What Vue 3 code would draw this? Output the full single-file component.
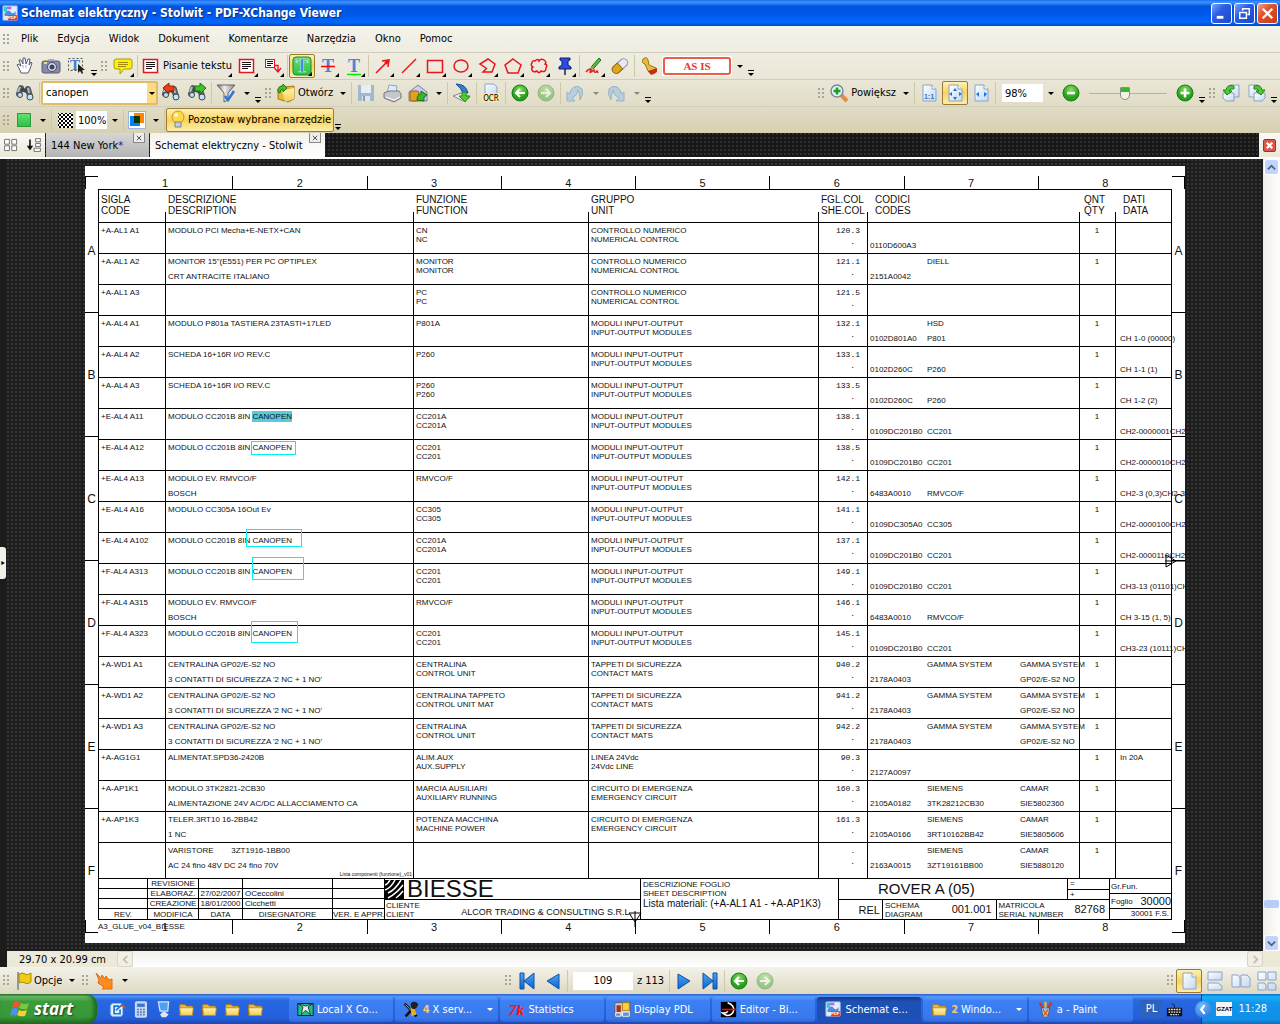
<script setup>
import { ref } from 'vue';

const query = ref('canopen');
const opacity = ref('100%');
const zoom = ref('98%');
const zoomPos = ref(45);
const pageNo = ref('109');

const menu = ['Plik', 'Edycja', 'Widok', 'Dokument', 'Komentarze', 'Narzędzia', 'Okno', 'Pomoc'];

// shared pieces of icons
const sheet = '<path d="M4 2h9l4 4v12H4z" fill="url(#paper)" stroke="#8ba3c7"/><path d="M13 2v4h4" fill="#fff" stroke="#8ba3c7"/>';
const bino = '<path d="M6 5L4 11M13 6l2 7" stroke="#566066" stroke-width="6" stroke-linecap="round"/><path d="M6 6l8 3" stroke="#3c464c" stroke-width="4"/><path d="M5 4l-2 5M13 5l1 5" stroke="#b4c0c6" stroke-width="2"/><circle cx="5" cy="12" r="2.500" fill="#c0e2fa" stroke="#3c464c"/><circle cx="15" cy="14" r="3" fill="#c0e2fa" stroke="#3c464c"/>';
const folder = '<path d="M2 5q0-1 1-1h5l2 2h7v11H2z" fill="#eab842" stroke="#a8740c"/><path d="M2 8h16l-1 9H3z" fill="url(#gold)" stroke="#b8861c"/>';
const redText = '<rect x="2.500" y="3.500" width="14" height="13" fill="#fff" stroke="#e8141c" stroke-width="1.500"/><path d="M5 6.500h9M5 8.500h9M5 10.500h9M5 12.500h6" stroke="#111"/>';
const tee = '<text x="10" y="16" text-anchor="middle" font-family="Liberation Serif, serif" font-weight="bold" font-size="18" fill="#4c86d8">T</text>';
const pdf = '<rect x="1" y="1" width="17" height="17" rx="1" fill="#e6edf8" stroke="#8aa8d8"/><path d="M2 2h4v6H2z" fill="#3cc"/><path d="M6 2h5v3H6z" fill="#a6f"/><path d="M3 10q4-6 7-2t6-1v6H3z" fill="#4b8fe0"/><path d="M7 12h11v6H7z" fill="#e63c22"/><text x="12" y="17" text-anchor="middle" font-family="Liberation Sans, sans-serif" font-weight="bold" font-size="5" fill="#fff">PDF</text>';

const icons = {
  app: pdf,
  hand: '<path d="M6 17L4 12 2 9l1-1 3 2-2-6 2 0 2 4 0-6h2l1 6 2-5 2 0-1 6 2-3 1 1-2 6-2 4z" fill="#fff" stroke="#555d78"/><path d="M8 9v3M11 9v3" stroke="#aab"/>',
  camera: '<rect x="1" y="5" width="18" height="12" rx="2" fill="#858aa6" stroke="#595d78"/><path d="M6 5l1-2h6l1 2z" fill="#a6aac2"/><circle cx="11" cy="11" r="4.500" fill="#d6d9e8" stroke="#4c4f66"/><circle cx="11" cy="11" r="2.500" fill="#3d4258"/><path d="M3 7h3" stroke="#f5d780" stroke-width="2"/>',
  select: '<path d="M1.500 2.500h14v12h-14z" fill="none" stroke="#555" stroke-dasharray="2 2"/><text x="8" y="14" text-anchor="middle" font-family="Liberation Serif, serif" font-weight="bold" font-size="15" fill="#3c7fd6">T</text><path d="M11 8v9l2-2 2 3 1-1-1-3h3z" fill="#222"/>',
  note: '<path d="M3 3h14q2 0 2 2v6q0 2-2 2h-6l-4 5v-5H3q-2 0-2-2V5q0-2 2-2z" fill="#fff200" stroke="#a39a10"/><path d="M5 6.500h10M5 8.500h10M5 10.500h8" stroke="#a08a10"/>',
  textbox: redText,
  callout: '<rect x="2.500" y="3.500" width="9" height="8" fill="#fff" stroke="#e8141c"/><path d="M4 5.500h6M4 7.500h6M4 9.500h4" stroke="#111"/><path d="M12 9.500h3v6M11.500 12l3.500 4 3-4" fill="none" stroke="#e8141c" stroke-width="1.300"/>',
  hilite: '<rect x="1" y="1" width="18" height="18" rx="3" fill="url(#green)" stroke="#1c8a2e"/><text x="10" y="16" text-anchor="middle" font-family="Liberation Serif, serif" font-weight="bold" font-size="18" fill="#3f74d8" stroke="#d4f0e0" stroke-width=".6">T</text>',
  strike: tee + '<path d="M3 10.500h14" stroke="#f00" stroke-width="1.500"/>',
  under: tee + '<path d="M3 18.500h14" stroke="#0e0" stroke-width="1.500"/>',
  arrow: '<path d="M3 17L15 5M9 5l7-1-1 7" fill="none" stroke="#e8141c" stroke-width="1.500"/><path d="M16 4l-5 2 3 3z" fill="#e8141c"/>',
  line: '<path d="M3 17L17 3" stroke="#e8141c" stroke-width="1.500"/>',
  rect: '<rect x="2.500" y="4.500" width="15" height="12" fill="none" stroke="#e8141c" stroke-width="1.500"/>',
  ellipse: '<ellipse cx="10" cy="10" rx="7" ry="6" fill="none" stroke="#e8141c" stroke-width="1.500"/>',
  polyline: '<path d="M9 12l-6-4 8-5 7 5-3 8H6l4-4" fill="none" stroke="#e8141c" stroke-width="1.500"/>',
  polygon: '<path d="M10 3l8 6-3 8H5L2 9z" fill="none" stroke="#e8141c" stroke-width="1.500"/>',
  cloud: '<path d="M6 5q3-3 4 0 2-3 5-1 3 2 1 4 3 1 1 4 0 5-5 3-2 3-4 0-4 2-5-1-1-2 1-3-3-2-1-4 0-3 3-2z" fill="none" stroke="#e8141c" stroke-width="1.500"/>',
  pin: '<path d="M5 2h10v2l-2 1v4l3 2v2H4v-2l3-2V5L5 4z" fill="#2a4ce0" stroke="#101c70"/><path d="M10 13v6" stroke="#223" stroke-width="1.500"/>',
  pencil: '<path d="M15 2l2 2-7 8-4 2 2-4z" fill="#58c040" stroke="#286818"/><path d="M6 14l2-4 2 2z" fill="#c94"/><path d="M2 16q3-4 5-2-2 3 0 2l3-2q0 3 2 2l1-1 1 2" fill="none" stroke="#e02020" stroke-width="1.500"/>',
  eraser: '<g transform="rotate(-42 10 10)"><rect x="1" y="6" width="18" height="8" rx="4" fill="#e4e8f4" stroke="#8a8fa8"/><path d="M10 6H5q-4 0-4 4t4 4h5z" fill="#e0a818" stroke="#94700c"/></g>',
  stamp: '<path d="M4 3q4-3 5 1l1 5 7 3q2 3-2 6-5 0-6-3L6 8Q2 7 4 3z" fill="#e8bc3c" stroke="#9c7414"/><path d="M9 15l9-3v4l-6 3z" fill="#c42c1c"/>',
  bino,
  binoPrev: bino + '<path d="M2 5l6-5v3h5v5H8v3z" fill="#e8401c" stroke="#902008"/>',
  binoNext: bino + '<path d="M19 5l-6-5v3H8v5h5v3z" fill="#40c030" stroke="#187810"/>',
  filter: '<path d="M1 2h18l-7 8v7l-4 2v-9z" fill="url(#steel)" stroke="#666"/><path d="M9 13l3 4 6-9" fill="none" stroke="#2c74e0" stroke-width="2.500"/>',
  open: '<path d="M2 6l3-3 4 1 9-1v13l-6 3-10-3z" fill="#e8b830" stroke="#a87c10"/><path d="M6 8l12-3v11l-9 3z" fill="url(#gold)"/><path d="M2 9q-1-6 5-6V1l4 4-4 4V6q-3 0-3 4z" fill="#48c030" stroke="#1c7c10"/>',
  save: '<path d="M2 2h16v16H2z" fill="#9fb9d0"/><path d="M5 2h10v8H5z" fill="#e8eef2"/><path d="M6 13h8v5H6z" fill="#dfe8ee"/><path d="M8 13v5" stroke="#89a" stroke-width="2"/>',
  print: '<path d="M7 2l8 1-1 7H5z" fill="#dcecff" stroke="#8aa8c8"/><path d="M2 10l5-2h10l2 3v4l-7 4-10-4z" fill="#c4c7cc" stroke="#777"/><path d="M4 14l8 3 6-3" stroke="#fff" fill="none"/>',
  mail: '<path d="M1 9l9-7 9 7v9H1z" fill="#c9cdf0" stroke="#7a80b0"/><rect x="2" y="8" width="9" height="10" rx="2" fill="#e0a020" stroke="#94680c"/><path d="M9 17q0-6 4-6V8l6 4-3 2 0 4z" fill="#38b828" stroke="#187010"/>',
  scan: '<path d="M1 13l8-3 9 4-7 4z" fill="#e8ecf2" stroke="#889"/><path d="M4 1q10 0 12 9h-5Q9 5 4 1z" fill="#2c80d8" stroke="#14508c"/><path d="M10 9h4v4h4l-5 6-6-6h3z" fill="#50c830" stroke="#2c8c18"/>',
  ocr: '<path d="M4 1h9l3 3v7H4z" fill="url(#paper)" stroke="#8ba3c7"/><rect x="1" y="10" width="18" height="9" fill="#fbe7a0"/><text x="10" y="18" text-anchor="middle" font-family="DejaVu Sans Condensed, sans-serif" font-size="8" fill="#000">OCR</text>',
  back: '<circle cx="10" cy="10" r="8" fill="url(#ball)" stroke="#1c7c14"/><path d="M15 10H6M10 6l-4 4 4 4" fill="none" stroke="#fff" stroke-width="2.200"/>',
  undo: '<path d="M2 9v9h8l-3-3q6-3 6-8 2 3 2 10 4-6 2-11-3-4-8-2-4 2-4 7z" fill="#b8cedd" stroke="#98b4c8"/>',
  redo: '<path d="M18 9v9h-8l3-3Q7 12 7 7 5 10 5 17 1 11 3 6q3-4 8-2 4 2 4 7z" fill="#b8cedd" stroke="#98b4c8"/>',
  zoomIn: '<path d="M12 12l6 6" stroke="#e88c40" stroke-width="4"/><circle cx="8" cy="8" r="6" fill="#e2f2fb" stroke="#7a8c9c" stroke-width="1.500"/><path d="M8 4.500v7M4.500 8h7" stroke="#18a018" stroke-width="2.500"/>',
  one: sheet + '<text x="10" y="16" text-anchor="middle" font-family="Liberation Sans, sans-serif" font-size="7" font-weight="bold" fill="#2878d0">1:1</text>',
  fit: sheet + '<path d="M8 8l2-3 2 3zM8 14l2 3 2-3zM7 9l-3 2 3 2zM14 9l3 2-3 2z" fill="#1c74e0"/>',
  fitw: sheet + '<path d="M8 9l-3 2 3 3zM13 9l3 2-3 3z" fill="#1c74e0"/>',
  minus: '<circle cx="10" cy="10" r="8" fill="url(#ball)" stroke="#1c7c14"/><path d="M6 10h8" stroke="#fff" stroke-width="2.500"/>',
  plus: '<circle cx="10" cy="10" r="8" fill="url(#ball)" stroke="#1c7c14"/><path d="M5.500 10h9M10 5.500v9" stroke="#fff" stroke-width="2.500"/>',
  rotL: '<path d="M9 2h9v12H9z" fill="url(#paper)" stroke="#8ba3c7"/><path d="M2 10h11v8H5l-3-3z" fill="url(#paper)" stroke="#8ba3c7"/><path d="M13 3Q6 1 5 7H2l4 5 5-4H8q1-3 5-2z" fill="#50c838" stroke="#1c8414"/>',
  rotR: '<path d="M2 2h9v12H2z" fill="url(#paper)" stroke="#8ba3c7"/><path d="M7 10h11v5l-3 3H7z" fill="url(#paper)" stroke="#8ba3c7"/><path d="M7 3q7-2 8 4h3l-4 5-5-4h3q-1-3-5-2z" fill="#50c838" stroke="#1c8414"/>',
  color: '<rect x="3.500" y="3.500" width="13" height="13" fill="url(#green)" stroke="#2a9a3a"/>',
  checker: '<rect x="3" y="3" width="15" height="15" fill="url(#chk)"/>',
  blend: '<rect x="1.500" y="1.500" width="17" height="17" fill="#fff" stroke="#9bb8d8"/><path d="M7 3h10v10H7z" fill="#ff8400"/><path d="M3 6h10v10H3z" fill="#0a7cff"/><path d="M7 6h6v7H7z" fill="#003c00"/>',
  bulb: '<circle cx="10" cy="7" r="6" fill="#ffd84a" stroke="#c89a18"/><path d="M7 12h6v5H7z" fill="#c9ccd4" stroke="#788"/><circle cx="8" cy="5" r="2" fill="#fff8d0"/>',
  flag: '<path d="M4 1v18" stroke="#999" stroke-width="2"/><path d="M5 3q4-2 6 0t6-1v9q-3 3-6 1t-6 0z" fill="#f0cc10" stroke="#a88c08"/>',
  launch: '<path d="M2 2l5 5 1-3 3 4 1-3 3 4 3-1v10H8l2-2-6-4 1-3z" fill="#ff8c1c" stroke="#e06c18"/>',
  first: '<path d="M3 2h4v16H3zM17 2v16L7 10z" fill="url(#blue)" stroke="#0c50a8"/>',
  prev: '<path d="M16 3v15L4 10z" fill="url(#blue)" stroke="#0c50a8"/>',
  next: '<path d="M4 3v15l12-8z" fill="url(#blue)" stroke="#0c50a8"/>',
  last: '<path d="M17 2h-4v16h4zM3 2v16l10-8z" fill="url(#blue)" stroke="#0c50a8"/>',
  single: sheet,
  cont: '<path d="M3 1h14v8H3z" fill="url(#paper)" stroke="#8ba3c7"/><path d="M3 12h10l4 3v4H3z" fill="url(#paper)" stroke="#8ba3c7"/>',
  facing: '<path d="M1 4h6l2 3v9H1zM10 4h6l3 3v9h-9z" fill="url(#paper)" stroke="#8ba3c7"/>',
  contFacing: '<path d="M1 1h8v8H1zM11 1h8v8h-8zM1 12h6l2 2v5H1zM11 12h6l2 2v5h-8z" fill="url(#paper)" stroke="#8ba3c7"/>',
  folder,
  outlook: '<rect x="2" y="3" width="14" height="15" rx="3" fill="#e8f4ff" stroke="#8cc0f0"/><path d="M12 6H6v9h7v-5M8 11l9-8" fill="none" stroke="#1c78d0" stroke-width="2"/><path d="M15 5l4 3" stroke="#e05010" stroke-width="2"/>',
  calc: '<rect x="4" y="1" width="13" height="18" rx="1" fill="#c2d8f4" stroke="#e0ecfc"/><path d="M6 3h9v4H6z" fill="#3c78c8"/><path d="M6 10h9M6 13h9M6 16h9" stroke="#5078b8" stroke-width="2" stroke-dasharray="2 1.500"/>',
  pc: '<path d="M4 1h12l-1 11H6z" fill="#4ca0f0" stroke="#d4e4f4" stroke-width="1.500"/><path d="M9 13h3l4 3-3 3H8l-2-3z" fill="#e0e4ec"/>',
  localx: '<rect x="1" y="3" width="18" height="14" fill="#16c890" stroke="#111"/><path d="M1 3l6 4-2 9 5-5 6 5-3-9 6-4-9 3z" fill="#eee" stroke="#222"/>',
  xserv: '<path d="M2 3l14 15M17 3L3 18" stroke="#111" stroke-width="3"/><path d="M3 4l11 12" stroke="#e8b020"/><path d="M9 8l5 2 2 6-6 2z" fill="#e8b020"/><circle cx="13" cy="5" r="4" fill="#222"/>',
  tk: '<text x="10" y="16" text-anchor="middle" font-family="Liberation Serif, serif" font-style="italic" font-weight="bold" font-size="18" fill="#ff1010">7k</text>',
  pdl: '<path d="M1 2h18v16H1z" fill="#c8ccd4" stroke="#556"/><path d="M3 5h5v8H3z" fill="#b82c10"/><path d="M10 2h8v9h-8z" fill="#ffd040" stroke="#a87c10"/><path d="M2 14h6v4H2zM10 13h8v5h-8z" fill="#5c90e0" stroke="#fff"/>',
  editor: '<path d="M1 1h18v18H1z" fill="#000"/><path d="M9 2q8 3 7 9t-8 6q-3-1-5-3 5 1 6-2" fill="none" stroke="#fff" stroke-width="1.800"/><path d="M2 10h17" stroke="#e01010" stroke-width="2"/>',
  paint: '<path d="M5 8h10l-2 11H7z" fill="#a8c8e8" stroke="#456"/><path d="M7 8L3 2M13 8l4-6" stroke="#d83010" stroke-width="2.500"/><path d="M10 8V1" stroke="#f0c020" stroke-width="2.500"/><path d="M7 10l6 8M13 10l-6 8" stroke="#e05818" stroke-width="1.500"/>',
  keyboard: '<rect x="1" y="8" width="18" height="10" fill="#111"/><path d="M3 10h14M3 13h14M5 16h10" stroke="#eee" stroke-width="1.500" stroke-dasharray="2 1"/><path d="M10 8V5L7 3" stroke="#111" fill="none"/>',
  thumbs: '<path d="M2 3h6v6H2zM11 3h6v6h-6zM2 11h6v6H2zM11 11h6v6h-6z" fill="#fff" stroke="#555"/>',
  sort: '<path d="M5 3v10" stroke="#111" stroke-width="2"/><path d="M1 11l4 6 4-6z" fill="#111"/><path d="M12 2h6v4h-6zM12 8h6v4h-6zM10 14h8v4h-8z" fill="#fff" stroke="#555"/>',
};

const shapes = ['arrow', 'line', 'rect', 'ellipse', 'polyline', 'polygon', 'cloud', 'pin'];

// s: code, d: description, f: function, u: unit, p: sheet.col, c: [code, maker, type, reseller, order no], q: quantity, n/m: data
const cn = ['CONTROLLO NUMERICO', 'NUMERICAL CONTROL'];
const io = ['MODULI INPUT-OUTPUT', 'INPUT-OUTPUT MODULES'];
const mats = ['TAPPETI DI SICUREZZA', 'CONTACT MATS'];
const emg = ['CIRCUITO DI EMERGENZA', 'EMERGENCY CIRCUIT'];
const gp = ['CENTRALINA GP02/E-S2 NO', "3 CONTATTI DI SICUREZZA '2 NC + 1 NO'"];
const gamma = ['2178A0403', 'GAMMA SYSTEM', '', 'GAMMA SYSTEM', 'GP02/E-S2 NO'];

const rows = [
  { s: '+A-AL1 A1', d: ['MODULO PCI Mecha+E-NETX+CAN'], f: ['CN', 'NC'], u: cn, p: '120.3', c: ['0110D600A3'], q: 1 },
  { s: '+A-AL1 A2', d: ['MONITOR 15"(E551) PER PC OPTIPLEX', 'CRT ANTRACITE ITALIANO'], f: ['MONITOR', 'MONITOR'], u: cn, p: '121.1', c: ['2151A0042', 'DIELL'], q: 1 },
  { s: '+A-AL1 A3', d: [], f: ['PC', 'PC'], u: cn, p: '121.5', c: [] },
  { s: '+A-AL4 A1', d: ['MODULO P801a TASTIERA 23TASTI+17LED'], f: ['P801A'], u: io, p: '132.1', c: ['0102D801A0', 'HSD', 'P801'], q: 1, m: 'CH 1-0 (00000)' },
  { s: '+A-AL4 A2', d: ['SCHEDA 16+16R I/O REV.C'], f: ['P260'], u: io, p: '133.1', c: ['0102D260C', '', 'P260'], q: 1, m: 'CH 1-1 (1)' },
  { s: '+A-AL4 A3', d: ['SCHEDA 16+16R I/O REV.C'], f: ['P260', 'P260'], u: io, p: '133.5', c: ['0102D260C', '', 'P260'], q: 1, m: 'CH 1-2 (2)' },
  { s: '+E-AL4 A11', d: ['MODULO CC201B 8IN '], hit: true, f: ['CC201A', 'CC201A'], u: io, p: '138.1', c: ['0109DC201B0', '', 'CC201'], q: 1, m: 'CH2-0000001CH2' },
  { s: '+E-AL4 A12', d: ['MODULO CC201B 8IN CANOPEN'], f: ['CC201', 'CC201'], u: io, p: '138.5', c: ['0109DC201B0', '', 'CC201'], q: 1, m: 'CH2-0000010CH2' },
  { s: '+E-AL4 A13', d: ['MODULO EV. RMVCO/F', 'BOSCH'], f: ['RMVCO/F'], u: io, p: '142.1', c: ['6483A0010', '', 'RMVCO/F'], q: 1, m: 'CH2-3 (0,3)CH2-3' },
  { s: '+E-AL4 A16', d: ['MODULO CC305A 16Out Ev'], f: ['CC305', 'CC305'], u: io, p: '141.1', c: ['0109DC305A0', '', 'CC305'], q: 1, m: 'CH2-0000100CH2' },
  { s: '+E-AL4 A102', d: ['MODULO CC201B 8IN CANOPEN'], f: ['CC201A', 'CC201A'], u: io, p: '137.1', c: ['0109DC201B0', '', 'CC201'], q: 1, m: 'CH2-0000110CH2' },
  { s: '+F-AL4 A313', d: ['MODULO CC201B 8IN CANOPEN'], f: ['CC201', 'CC201'], u: io, p: '149.1', c: ['0109DC201B0', '', 'CC201'], q: 1, m: 'CH3-13 (01101)CH' },
  { s: '+F-AL4 A315', d: ['MODULO EV. RMVCO/F', 'BOSCH'], f: ['RMVCO/F'], u: io, p: '146.1', c: ['6483A0010', '', 'RMVCO/F'], q: 1, m: 'CH 3-15 (1, 5)' },
  { s: '+F-AL4 A323', d: ['MODULO CC201B 8IN CANOPEN'], f: ['CC201', 'CC201'], u: io, p: '145.1', c: ['0109DC201B0', '', 'CC201'], q: 1, m: 'CH3-23 (10111)CH' },
  { s: '+A-WD1 A1', d: gp, f: ['CENTRALINA', 'CONTROL UNIT'], u: mats, p: '940.2', c: gamma, q: 1 },
  { s: '+A-WD1 A2', d: gp, f: ['CENTRALINA TAPPETO', 'CONTROL UNIT MAT'], u: mats, p: '941.2', c: gamma, q: 1 },
  { s: '+A-WD1 A3', d: gp, f: ['CENTRALINA', 'CONTROL UNIT'], u: mats, p: '942.2', c: gamma, q: 1 },
  { s: '+A-AG1G1', d: ['ALIMENTAT.SPD36-2420B'], f: ['ALIM.AUX', 'AUX.SUPPLY'], u: ['LINEA 24Vdc', '24Vdc LINE'], p: '90.3', c: ['2127A0097'], q: 1, n: 'In 20A' },
  { s: '+A-AP1K1', d: ['MODULO 3TK2821-2CB30', 'ALIMENTAZIONE 24V AC/DC ALLACCIAMENTO CA'], f: ['MARCIA AUSILIARI', 'AUXILIARY RUNNING'], u: emg, p: '160.3', c: ['2105A0182', 'SIEMENS', '3TK28212CB30', 'CAMAR', 'SIE5802360'], q: 1 },
  { s: '+A-AP1K3', d: ['TELER.3RT10 16-2BB42', '1 NC'], f: ['POTENZA MACCHINA', 'MACHINE POWER'], u: emg, p: '161.3', c: ['2105A0166', 'SIEMENS', '3RT10162BB42', 'CAMAR', 'SIE5805606'], q: 1 },
  { s: '', d: ['VARISTORE        3ZT1916-1BB00', 'AC 24 fino 48V DC 24 fino 70V'], f: [], u: [], p: '. ', c: ['2163A0015', 'SIEMENS', '3ZT19161BB00', 'CAMAR', 'SIE5880120'], q: 1, foot: 'Lista componenti (funzione)_v01' },
];

// rectangles drawn by hand over the sheet
const marks = [
  { x: 166, y: 275, w: 45, h: 14 },
  { x: 161, y: 363, w: 56, h: 18 },
  { x: 167, y: 391, w: 52, h: 23 },
  { x: 166, y: 455, w: 47, h: 22 },
];
const px = (m) => ({ left: m.x + 'px', top: m.y + 'px', width: m.w + 'px', height: m.h + 'px' });

const tasks = [
  { icon: 'localx', text: 'Local X Co...' },
  { icon: 'xserv', n: 4, text: 'X serv...' },
  { icon: 'tk', text: 'Statistics' },
  { icon: 'pdl', text: 'Display PDL' },
  { icon: 'editor', text: 'Editor - Bi...' },
  { icon: 'app', text: 'Schemat e...', on: true },
  { icon: 'folder', n: 2, text: 'Windo...' },
  { icon: 'paint', text: 'a - Paint' },
];
</script>

<template>
  <div class="window">
    <svg class="defs" width="0" height="0" aria-hidden="true">
      <defs>
        <linearGradient id="paper" x2="1" y2="1"><stop stop-color="#fff" /><stop offset="1" stop-color="#c4d8f0" /></linearGradient>
        <linearGradient id="gold" x2="0" y2="1"><stop stop-color="#fff4b4" /><stop offset="1" stop-color="#f4cc54" /></linearGradient>
        <linearGradient id="green" x2="0" y2="1"><stop stop-color="#62e070" /><stop offset="1" stop-color="#2fbf48" /></linearGradient>
        <linearGradient id="steel"><stop stop-color="#666" /><stop offset=".4" stop-color="#eee" /><stop offset="1" stop-color="#888" /></linearGradient>
        <linearGradient id="blue" x2="0" y2="1"><stop stop-color="#4ca4f4" /><stop offset="1" stop-color="#0c64cc" /></linearGradient>
        <radialGradient id="ball" cy=".3"><stop stop-color="#8ce060" /><stop offset="1" stop-color="#26a01c" /></radialGradient>
        <pattern id="chk" width="4" height="4" patternUnits="userSpaceOnUse"><rect width="4" height="4" fill="#fff" /><path d="M0 0h2v2H0zM2 2h2v2H2z" fill="#000" /></pattern>
      </defs>
    </svg>

    <header class="titlebar">
      <svg class="ico small" viewBox="0 0 20 20" v-html="icons.app"></svg>
      <h1>Schemat elektryczny - Stolwit - PDF-XChange Viewer</h1>
      <button class="cap" aria-label="Minimalizuj"><svg viewBox="0 0 20 20"><path d="M5 14h7" stroke="#fff" stroke-width="3" /></svg></button>
      <button class="cap" aria-label="Przywróć"><svg viewBox="0 0 20 20"><path d="M8 7V5h7v6h-2M5 9h7v6H5z" fill="none" stroke="#fff" stroke-width="1.5" /></svg></button>
      <button class="cap close" aria-label="Zamknij"><svg viewBox="0 0 20 20"><path d="M5 5l10 10M15 5L5 15" stroke="#fff" stroke-width="2.5" /></svg></button>
    </header>

    <div class="bars">
      <nav class="bar menubar">
        <i class="grip"></i>
        <button v-for="m in menu" :key="m">{{ m }}</button>
      </nav>

      <div class="bar">
        <i class="grip"></i>
        <button v-for="n in ['hand', 'camera', 'select']" :key="n" class="tb" :aria-label="n"><svg class="ico" viewBox="0 0 20 20" v-html="icons[n]"></svg></button>
        <i class="more"></i>
        <i class="grip"></i>
        <button class="tb sub" aria-label="note"><svg class="ico" viewBox="0 0 20 20" v-html="icons.note"></svg></button>
        <i class="sep"></i>
        <button class="tb sub typing"><svg class="ico" viewBox="0 0 20 20" v-html="icons.textbox"></svg>Pisanie tekstu</button>
        <button v-for="n in ['textbox', 'callout']" :key="n" class="tb sub" :aria-label="n"><svg class="ico" viewBox="0 0 20 20" v-html="icons[n]"></svg></button>
        <i class="sep"></i>
        <button class="tb sub on" aria-label="hilite"><svg class="ico" viewBox="0 0 20 20" v-html="icons.hilite"></svg></button>
        <button v-for="n in ['strike', 'under']" :key="n" class="tb sub" :aria-label="n"><svg class="ico" viewBox="0 0 20 20" v-html="icons[n]"></svg></button>
        <i class="sep"></i>
        <button v-for="n in shapes" :key="n" class="tb sub" :aria-label="n"><svg class="ico" viewBox="0 0 20 20" v-html="icons[n]"></svg></button>
        <i class="sep"></i>
        <button class="tb sub" aria-label="pencil"><svg class="ico" viewBox="0 0 20 20" v-html="icons.pencil"></svg></button>
        <button class="tb" aria-label="eraser"><svg class="ico" viewBox="0 0 20 20" v-html="icons.eraser"></svg></button>
        <i class="sep"></i>
        <button class="tb" aria-label="stamp"><svg class="ico" viewBox="0 0 20 20" v-html="icons.stamp"></svg></button>
        <button class="asis"><span>AS IS</span></button>
        <button class="dd" aria-label="Stemple"></button>
        <i class="more"></i>
      </div>

      <div class="bar">
        <i class="grip"></i>
        <button class="tb" aria-label="bino"><svg class="ico" viewBox="0 0 20 20" v-html="icons.bino"></svg></button>
        <i class="sep"></i>
        <div class="search">
          <input v-model="query" type="text" aria-label="Szukaj">
          <button class="dd" aria-label="Historia"></button>
        </div>
        <button v-for="n in ['binoPrev', 'binoNext']" :key="n" class="tb" :aria-label="n"><svg class="ico" viewBox="0 0 20 20" v-html="icons[n]"></svg></button>
        <i class="sep"></i>
        <button class="tb" aria-label="filter"><svg class="ico" viewBox="0 0 20 20" v-html="icons.filter"></svg></button>
        <button class="dd" aria-label="Opcje filtra"></button>
        <i class="more"></i>
        <i class="grip"></i>
        <button class="tb wide"><svg class="ico" viewBox="0 0 20 20" v-html="icons.open"></svg>Otwórz</button>
        <button class="dd" aria-label="Ostatnie"></button>
        <i class="sep"></i>
        <button v-for="n in ['save', 'print', 'mail']" :key="n" class="tb" :aria-label="n"><svg class="ico" viewBox="0 0 20 20" v-html="icons[n]"></svg></button>
        <button class="dd" aria-label="Wyślij"></button>
        <i class="sep"></i>
        <button class="tb" aria-label="scan"><svg class="ico" viewBox="0 0 20 20" v-html="icons.scan"></svg></button>
        <i class="sep"></i>
        <button class="tb" aria-label="ocr"><svg class="ico" viewBox="0 0 20 20" v-html="icons.ocr"></svg></button>
        <i class="sep"></i>
        <button class="tb" aria-label="back"><svg class="ico" viewBox="0 0 20 20" v-html="icons.back"></svg></button>
        <button class="tb off" disabled aria-label="forward"><svg class="ico flip" viewBox="0 0 20 20" v-html="icons.back"></svg></button>
        <i class="sep"></i>
        <button class="tb" disabled aria-label="undo"><svg class="ico" viewBox="0 0 20 20" v-html="icons.undo"></svg></button>
        <button class="dd off" disabled aria-label="Cofnij"></button>
        <button class="tb" disabled aria-label="redo"><svg class="ico" viewBox="0 0 20 20" v-html="icons.redo"></svg></button>
        <button class="dd off" disabled aria-label="Ponów"></button>
        <i class="more"></i>

        <i class="grip right"></i>
        <button class="tb wide"><svg class="ico" viewBox="0 0 20 20" v-html="icons.zoomIn"></svg>Powiększ</button>
        <button class="dd" aria-label="Powiększanie"></button>
        <i class="sep"></i>
        <button class="tb" aria-label="one"><svg class="ico" viewBox="0 0 20 20" v-html="icons.one"></svg></button>
        <button class="tb on" aria-label="fit"><svg class="ico" viewBox="0 0 20 20" v-html="icons.fit"></svg></button>
        <button class="tb" aria-label="fitw"><svg class="ico" viewBox="0 0 20 20" v-html="icons.fitw"></svg></button>
        <i class="sep"></i>
        <input v-model="zoom" class="field zoomfield" type="text" aria-label="Skala">
        <button class="dd" aria-label="Skale"></button>
        <button class="tb" aria-label="minus"><svg class="ico" viewBox="0 0 20 20" v-html="icons.minus"></svg></button>
        <input v-model="zoomPos" class="slider" type="range" min="0" max="100" aria-label="Suwak skali">
        <button class="tb" aria-label="plus"><svg class="ico" viewBox="0 0 20 20" v-html="icons.plus"></svg></button>
        <i class="more"></i>
        <i class="grip"></i>
        <button v-for="n in ['rotL', 'rotR']" :key="n" class="tb" :aria-label="n"><svg class="ico" viewBox="0 0 20 20" v-html="icons[n]"></svg></button>
        <i class="more"></i>
      </div>

      <div class="bar">
        <i class="grip"></i>
        <button class="tb slim" aria-label="color"><svg class="ico" viewBox="0 0 20 20" v-html="icons.color"></svg></button>
        <button class="dd" aria-label="Kolor"></button>
        <i class="sep"></i>
        <button class="tb slim" aria-label="checker"><svg class="ico" viewBox="0 0 20 20" v-html="icons.checker"></svg></button>
        <input v-model="opacity" class="field opfield" type="text" aria-label="Krycie">
        <button class="dd" aria-label="Krycia"></button>
        <i class="sep"></i>
        <button class="tb slim" aria-label="blend"><svg class="ico" viewBox="0 0 20 20" v-html="icons.blend"></svg></button>
        <button class="dd" aria-label="Mieszanie"></button>
        <i class="sep"></i>
        <button class="tb wide on keep"><svg class="ico" viewBox="0 0 20 20" v-html="icons.bulb"></svg>Pozostaw wybrane narzędzie</button>
        <i class="more"></i>
      </div>
    </div>

    <div class="tabs">
      <div class="tabtools">
        <button v-for="n in ['thumbs', 'sort']" :key="n" :aria-label="n"><svg class="ico" viewBox="0 0 20 20" v-html="icons[n]"></svg></button>
      </div>
      <div class="tab">
        <a href="#">144 New York<b>*</b></a>
        <button aria-label="Zamknij kartę"><svg viewBox="0 0 8 8"><path d="M1 1l6 6M7 1L1 7" /></svg></button>
      </div>
      <div class="tab current">
        <a href="#">Schemat elektryczny - Stolwit</a>
        <button aria-label="Zamknij kartę"><svg viewBox="0 0 8 8"><path d="M1 1l6 6M7 1L1 7" /></svg></button>
      </div>
      <div class="closeall">
        <button aria-label="Zamknij dokument"><svg viewBox="0 0 12 12"><path d="M3 3l6 6M9 3L3 9" stroke="#fff" stroke-width="2.5" /></svg></button>
      </div>
    </div>

    <div class="work">
      <div class="splitter"><button aria-label="Panel">▸</button></div>
      <main class="canvas">
        <article class="sheet">
          <div class="corner tl"></div>
          <div class="ruler top"><span v-for="n in 8" :key="n">{{ n }}</span></div>
          <div class="corner tr"></div>

          <div class="side"><span v-for="l in 'ABCDEF'" :key="l">{{ l }}</span></div>

          <section class="frame">
            <table class="parts">
              <colgroup>
                <col class="c-sigla"><col><col class="c-fun"><col class="c-unit"><col class="c-fgl"><col class="c-code"><col class="c-qty"><col class="c-data">
              </colgroup>
              <thead>
                <tr>
                  <th>SIGLA<br>CODE</th>
                  <th>DESCRIZIONE<br>DESCRIPTION</th>
                  <th>FUNZIONE<br>FUNCTION</th>
                  <th>GRUPPO<br>UNIT</th>
                  <th>FGL.COL<br>SHE.COL</th>
                  <th class="h-code">CODICI<br>CODES</th>
                  <th class="h-qty">QNT<br>QTY</th>
                  <th class="h-data">DATI<br>DATA</th>
                </tr>
              </thead>
              <tbody>
                <tr v-for="(r, i) in rows" :key="i">
                  <td>{{ r.s }}</td>
                  <td class="desc">
                    <p>{{ r.d[0] }}<mark v-if="r.hit">CANOPEN</mark></p>
                    <p class="low">{{ r.d[1] }}</p>
                    <small v-if="r.foot">{{ r.foot }}</small>
                  </td>
                  <td>{{ r.f[0] }}<br>{{ r.f[1] }}</td>
                  <td>{{ r.u[0] }}<br>{{ r.u[1] }}</td>
                  <td class="fgl"><p>{{ r.p }}</p><p class="dot">.</p></td>
                  <td class="code">
                    <div class="codes">
                      <span></span><span>{{ r.c[1] }}</span><span>{{ r.c[3] }}</span>
                      <span>{{ r.c[0] }}</span><span>{{ r.c[2] }}</span><span>{{ r.c[4] }}</span>
                    </div>
                  </td>
                  <td class="qty">{{ r.q }}</td>
                  <td class="data"><p>{{ r.n }}</p><p class="low">{{ r.m }}</p></td>
                </tr>
              </tbody>
            </table>

            <footer class="block">
              <table class="revs">
                <colgroup><col class="r1"><col class="r2"><col class="r3"><col class="r4"><col></colgroup>
                <tbody>
                  <tr><td></td><td>REVISIONE</td><td></td><td></td><td></td></tr>
                  <tr><td></td><td>ELABORAZ.</td><td>27/02/2007</td><td class="name">OCeccolini</td><td></td></tr>
                  <tr><td></td><td>CREAZIONE</td><td>18/01/2000</td><td class="name">Cicchetti</td><td></td></tr>
                  <tr><td>REV.</td><td>MODIFICA</td><td>DATA</td><td>DISEGNATORE</td><td>VER. E APPR.</td></tr>
                </tbody>
              </table>
              <div class="client">
                <div class="brand">
                  <svg viewBox="0 0 19 19"><path d="M0 0h19v19H0z" fill="#000" /><path d="M0 5q3-1 5-5M0 10q6-2 10-10M3 13q7-3 13-13M3 18q8-4 15-13M11 18q4-3 7-7" fill="none" stroke="#fff" stroke-width="1.5" /></svg>
                  <strong>BIESSE</strong>
                </div>
                <div class="who"><span>CLIENTE<br>CLIENT</span><em>ALCOR TRADING &amp; CONSULTING S.R.L.</em></div>
              </div>
              <div class="about">DESCRIZIONE FOGLIO<br>SHEET DESCRIPTION<p>Lista materiali: (+A-AL1 A1 - +A-AP1K3)</p></div>
              <div class="model">
                <div class="rover"><strong>ROVER A (05)</strong><div class="signs"><span>=</span><span>+</span></div></div>
                <div class="nums">
                  <b class="rel">REL</b>
                  <div><span>SCHEMA<br>DIAGRAM</span><b>001.001</b></div>
                  <div><span>MATRICOLA<br>SERIAL NUMBER</span><b>82768</b></div>
                </div>
              </div>
              <div class="folio">
                <div>Gr.Fun.</div>
                <div>Foglio <b>30000</b></div>
                <div class="next">30001 F.S.</div>
              </div>
            </footer>
          </section>

          <div class="side"><span v-for="l in 'ABCDEF'" :key="l">{{ l }}</span></div>

          <div class="corner bl"></div>
          <div class="ruler bottom"><span v-for="n in 8" :key="n">{{ n }}</span></div>
          <div class="corner br"></div>

          <span class="template">A3_GLUE_v04_BIESSE</span>
          <svg class="fold down" viewBox="0 0 14 16"><path d="M1 2h12L7 11zM7 0v16" fill="none" stroke="#000" /></svg>
          <svg class="fold east" viewBox="0 0 20 14"><path d="M1 1v12l10-6zM0 7h20" fill="none" stroke="#000" /></svg>
          <i v-for="(m, i) in marks" :key="i" class="box" :style="px(m)"></i>
        </article>
      </main>
      <div class="vscroll">
        <button aria-label="W górę"><svg viewBox="0 0 10 10"><path d="M1 7l4-4 4 4" /></svg></button>
        <i class="thumb"></i>
        <button aria-label="W dół"><svg viewBox="0 0 10 10"><path d="M1 3l4 4 4-4" /></svg></button>
      </div>
    </div>

    <div class="status">
      <span class="size">29.70 x 20.99 cm</span>
      <button disabled aria-label="W lewo"><svg viewBox="0 0 10 10"><path d="M7 1L3 5l4 4" /></svg></button>
      <div class="track"></div>
      <button disabled aria-label="W prawo"><svg viewBox="0 0 10 10"><path d="M3 1l4 4-4 4" /></svg></button>
      <i class="sizer"></i>
    </div>

    <div class="navbar">
      <div class="group">
        <i class="grip"></i>
        <button class="tb wide nogap"><svg class="ico" viewBox="0 0 20 20" v-html="icons.flag"></svg>Opcje</button>
        <button class="dd" aria-label="Opcje"></button>
        <i class="grip"></i>
        <button class="tb" aria-label="launch"><svg class="ico" viewBox="0 0 20 20" v-html="icons.launch"></svg></button>
        <button class="dd" aria-label="Uruchom"></button>
      </div>
      <div class="group">
        <i class="grip"></i>
        <button v-for="n in ['first', 'prev']" :key="n" class="tb" :aria-label="n"><svg class="ico" viewBox="0 0 20 20" v-html="icons[n]"></svg></button>
        <i class="sep"></i>
        <label class="pager"><input v-model="pageNo" class="field" type="text"> z 113</label>
        <i class="sep"></i>
        <button v-for="n in ['next', 'last']" :key="n" class="tb" :aria-label="n"><svg class="ico" viewBox="0 0 20 20" v-html="icons[n]"></svg></button>
        <i class="sep"></i>
        <button class="tb" aria-label="back"><svg class="ico" viewBox="0 0 20 20" v-html="icons.back"></svg></button>
        <button class="tb off" disabled aria-label="forward"><svg class="ico flip" viewBox="0 0 20 20" v-html="icons.back"></svg></button>
      </div>
      <div class="group end">
        <i class="grip"></i>
        <button class="tb on" aria-label="single"><svg class="ico" viewBox="0 0 20 20" v-html="icons.single"></svg></button>
        <button v-for="n in ['cont', 'facing', 'contFacing']" :key="n" class="tb" :aria-label="n"><svg class="ico" viewBox="0 0 20 20" v-html="icons[n]"></svg></button>
      </div>
    </div>

    <footer class="taskbar">
      <button class="start">
        <svg viewBox="0 0 20 20"><path d="M4 3q3-2 6 0L8 9q-3-2-6 0z" fill="#f0582c" /><path d="M11 4q3 2 8 0l-2 6q-4 1-8-1z" fill="#7cc83c" /><path d="M2 10q3-2 6 0l-2 7q-3-2-6 0z" fill="#4c90f4" /><path d="M9 11q3 2 8 0l-2 6q-4 1-8-1z" fill="#fcd02c" /></svg>
        start
      </button>
      <div class="quick">
        <button v-for="(n, i) in ['outlook', 'calc', 'pc', 'folder', 'folder', 'folder', 'folder']" :key="i" :aria-label="n"><svg class="ico small" viewBox="0 0 20 20" v-html="icons[n]"></svg></button>
      </div>
      <div class="tasks">
        <button v-for="t in tasks" :key="t.text" :class="{ on: t.on }">
          <svg class="ico small" viewBox="0 0 20 20" v-html="icons[t.icon]"></svg>
          <b v-if="t.n">{{ t.n }}</b>
          <span>{{ t.text }}</span>
          <i v-if="t.n" class="tick"></i>
        </button>
      </div>
      <div class="lang"><button>PL</button><svg class="ico small" viewBox="0 0 20 20" v-html="icons.keyboard"></svg></div>
      <div class="tray">
        <button aria-label="Pokaż ikony"><svg viewBox="0 0 10 10"><path d="M6 1L3 5l3 4" fill="none" stroke="#fff" stroke-width="2" /></svg></button>
        <span class="gzat">GZAT</span>
        <time>11:28</time>
      </div>
    </footer>
  </div>
</template>

<style>
body {
  margin: 0;
  overflow: hidden;
}
</style>

<style scoped>
.window {
  display: flex;
  flex-direction: column;
  height: 100vh;
  background: #ece9d8;
  font: 11px/14px "DejaVu Sans Condensed", "DejaVu Sans", sans-serif;
  color: #000;
}

button,
input {
  font: inherit;
  color: inherit;
  margin: 0;
  padding: 0;
  border: 0;
  background: none;
  box-sizing: border-box;
}

p {
  margin: 0;
}

.defs {
  position: absolute;
}

.ico {
  width: 20px;
  height: 20px;
  flex: none;
}

.ico.small {
  width: 17px;
  height: 17px;
}

.flip {
  transform: scaleX(-1);
}

/* title bar */
.titlebar {
  display: flex;
  align-items: center;
  gap: 2px;
  flex: none;
  height: 26px;
  padding: 0 2px;
  box-sizing: border-box;
  background: linear-gradient(#1c6cf0, #3c96ff 8%, #0054e0 25%, #0058ea 55%, #0068ff 85%, #0048c8);
}

.titlebar h1 {
  flex: 1;
  margin: 0;
  font: bold 12px/16px "DejaVu Sans Condensed", "DejaVu Sans", sans-serif;
  color: #fff;
  text-shadow: 1px 1px 1px #0a2c80;
}

.cap {
  width: 21px;
  height: 21px;
  border: 1px solid #fff;
  border-radius: 3px;
  background: linear-gradient(135deg, #7ca4f8, #2c5ce4 40%, #1c48c8);
}

.cap.close {
  background: linear-gradient(135deg, #f0a088, #e0502c 40%, #c83c14);
}

.cap svg {
  display: block;
}

/* toolbars */
.bars {
  flex: none;
  background: linear-gradient(#f4f3ea, #eae7d8 50%, #d7d1b2);
}

.bar {
  display: flex;
  align-items: center;
  height: 27px;
  padding-right: 2px;
  box-sizing: border-box;
  border-top: 1px solid #d0cdbc;
}

.bar.menubar {
  height: 26px;
  border-top: 0;
}

.menubar button {
  padding: 0 10px 0 9px;
}

.grip {
  flex: none;
  width: 6px;
  height: 11px;
  margin: 0 3px;
  background: radial-gradient(circle at 1px 1px, #a9a695 1px, transparent 1px) 0 0 / 4px 4px;
}

.grip.right {
  margin-left: auto;
}

.sep {
  flex: none;
  width: 1px;
  height: 22px;
  margin: 0 1px;
  background: #cdc8a8;
}

.tb {
  position: relative;
  display: flex;
  align-items: center;
  justify-content: center;
  flex: none;
  width: 26px;
  height: 24px;
  white-space: nowrap;
}

.tb.slim {
  width: 23px;
}

.tb.wide {
  width: auto;
  gap: 2px;
  padding: 0 2px;
}

.tb.nogap {
  gap: 0;
}

.tb.typing {
  width: 95px;
  gap: 2px;
}

.tb.sub::after {
  content: "";
  position: absolute;
  right: 2px;
  bottom: 1px;
  border: 2px solid;
  border-color: transparent #000 #000 transparent;
}

.tb.on {
  border: 1px solid #9a7b30;
  border-radius: 2px;
  background: linear-gradient(#fdf0b8, #f9d35c 50%, #fdeeb0);
}

.tb.keep {
  gap: 0;
  padding: 0 2px 0 1px;
}

.off {
  opacity: .4;
}

.dd {
  flex: none;
  width: 15px;
  height: 22px;
}

.dd::before,
.tick {
  content: "";
  display: block;
  width: 0;
  margin: auto;
  border: 3px solid transparent;
  border-top-color: currentColor;
  border-bottom: 0;
}

.more {
  flex: none;
  width: 6px;
  margin: 14px 1px 0;
  border-top: 1px solid #000;
}

.more::after {
  content: "";
  display: block;
  margin-top: 2px;
  border: 3px solid transparent;
  border-top-color: #000;
  border-bottom: 0;
}

.asis {
  width: 70px;
  height: 20px;
  padding: 1px;
  background: #fff;
}

.asis span {
  display: block;
  border: 2px solid #e8604c;
  border-radius: 3px;
  font: bold 11px/14px "Liberation Serif", serif;
  color: #e23c28;
}

.search {
  display: flex;
  width: 117px;
  height: 24px;
  box-sizing: border-box;
  border: 2px solid #e2bc64;
  border-radius: 2px;
  background: #fff;
}

.search input {
  flex: 1;
  min-width: 0;
  padding: 0 3px;
}

.search .dd {
  width: 9px;
  height: 20px;
  background: #fbdc80;
}

.field {
  height: 18px;
  background: #fff;
}

.zoomfield {
  width: 41px;
  margin-left: 5px;
  padding-left: 3px;
}

.opfield {
  width: 31px;
  padding-left: 2px;
}

.slider {
  appearance: none;
  width: 78px;
  height: 16px;
  margin: 0 5px;
  background: linear-gradient(#b8b48c, #b8b48c) center / 100% 1px no-repeat;
}

.slider::-webkit-slider-thumb {
  appearance: none;
  width: 10px;
  height: 13px;
  border: 1px solid #8c8f84;
  border-radius: 1px 1px 5px 5px;
  background: linear-gradient(#38b828 40%, #f0f2ec 40%);
}

/* document tabs */
.tabs {
  display: flex;
  flex: none;
  gap: 1px;
  height: 26px;
  box-sizing: border-box;
  border-bottom: 2px solid #fff;
  background: radial-gradient(circle at 1px 1px, #303030 1px, #171717 1px) 0 0 / 4px 4px;
}

.tabtools,
.closeall {
  display: flex;
  align-items: center;
  width: 45px;
  background: linear-gradient(#fbfaf6, #ece8d8);
}

.tabtools button {
  width: 23px;
  padding: 1px;
}

.tabtools .ico {
  width: 16px;
  height: 16px;
  display: block;
  margin: auto;
}

.tab {
  display: flex;
  gap: 6px;
  width: 103px;
  padding: 0 4px 0 5px;
  box-sizing: border-box;
  background: linear-gradient(#d6d6d6, #b4b4b4);
}

.tab.current {
  width: auto;
  background: linear-gradient(#f4f2ea, #fff);
}

.tab a {
  flex: 1;
  padding-top: 6px;
  color: #000;
  text-decoration: none;
  white-space: nowrap;
}

.tab b {
  color: #1414a0;
  font-weight: normal;
}

.tab button {
  width: 12px;
  height: 10px;
  border: 1px solid #888;
  border-top: 0;
  background: #eee;
}

.tab svg {
  display: block;
  width: 6px;
  height: 6px;
  margin: auto;
  stroke: #222;
}

.closeall {
  width: 21px;
  margin-left: auto;
}

.closeall button {
  width: 13px;
  height: 13px;
  margin: auto;
  border: 1px solid #98342c;
  border-radius: 2px;
  background: #d8594c;
}

.closeall svg {
  display: block;
}

/* sheet */
.work {
  display: flex;
  flex: 1;
  min-height: 0;
}

.splitter {
  display: flex;
  align-items: center;
  width: 7px;
  background: #1c1c1c;
}

.splitter button {
  width: 6px;
  height: 32px;
  margin-top: 16px;
  border-radius: 0 3px 3px 0;
  background: #f2f0e6;
  font-size: 8px;
}

.canvas {
  flex: 1;
  min-width: 0;
  padding: 7px 78px 0;
  overflow: hidden;
  background: radial-gradient(circle at 1px 1px, #363636 1px, #1d1d1d 1px) 0 0 / 4px 4px;
}

.sheet {
  position: relative;
  display: grid;
  grid-template-columns: 13px 1fr 13px;
  grid-template-rows: 13px auto 13px;
  padding: 10px 0;
  overflow: hidden;
  background: #fff;
  font: 8px/9px "Liberation Sans", Arial, sans-serif;
  color: #111;
}

.corner {
  border: 0 solid #000;
}

.tl { border-width: 1px 0 0 1px; }
.tr { border-width: 1px 1px 0 0; }
.bl { border-width: 0 0 1px 1px; }
.br { border-width: 0 1px 1px 0; }

.ruler {
  display: grid;
  grid-template-columns: repeat(8, 1fr);
  font-size: 11px;
  line-height: 14px;
  text-align: center;
}

.ruler.bottom {
  height: 13px;
}

.ruler span + span {
  border-left: 1px solid #000;
}

.side {
  display: grid;
  grid-template-rows: repeat(5, 124px) 1fr;
  font-size: 12px;
  line-height: 14px;
  text-align: center;
}

.side span {
  padding-top: 55px;
  border-bottom: 1px solid #000;
}

.side span:last-child {
  border: 0;
}

.frame {
  min-width: 0;
  border: 1px solid #000;
}

.parts,
.revs {
  width: 100%;
  table-layout: fixed;
  border-spacing: 0;
}

.c-sigla { width: 67px; }
.c-fun { width: 175px; }
.c-unit { width: 230px; }
.c-fgl { width: 49px; }
.c-code { width: 212px; }
.c-qty { width: 36px; }
.c-data { width: 55px; }

.parts th {
  height: 33px;
  padding: 4px 0 0 2px;
  box-sizing: border-box;
  border-bottom: 1px solid #000;
  background: linear-gradient(#000, #000) right bottom / 1px 10px no-repeat;
  font-size: 10px;
  font-weight: normal;
  line-height: 11px;
  text-align: left;
  vertical-align: top;
  white-space: nowrap;
}

.parts th.h-code,
.parts th.h-data {
  padding-left: 7px;
}

.parts th.h-qty {
  padding-left: 4px;
}

.parts th:last-child {
  background: none;
}

.parts td {
  height: 31px;
  padding: 3px 0 0 2px;
  box-sizing: border-box;
  border: 0 solid #000;
  border-width: 0 1px 1px 0;
  vertical-align: top;
  white-space: pre;
}

.parts td:last-child {
  border-right: 0;
}

.parts tr:last-child td {
  height: 36px;
}

.parts p {
  height: 9px;
}

.parts .low {
  margin-top: 6px;
}

.desc small {
  display: block;
  padding: 1px 1px 0 0;
  font-size: 5px;
  line-height: 7px;
  text-align: right;
}

.desc mark {
  background: #58cade;
  color: #111;
  padding: 1px 0;
}

.parts .fgl {
  padding-right: 7px;
  font-family: "Liberation Mono", "Courier New", monospace;
  text-align: right;
}

.fgl .dot {
  margin-top: 2px;
  padding-right: 5px;
}

.codes {
  display: grid;
  grid-template-columns: 57px 93px 1fr;
  grid-template-rows: 9px 9px;
  row-gap: 6px;
}

.parts .qty {
  padding-right: 3px;
  text-align: center;
}

.parts .data {
  padding-left: 4px;
}

/* title block */
.block {
  display: grid;
  grid-template-columns: 286px 256px 198px 1fr 61px;
  height: 40px;
}

.block > div {
  box-sizing: border-box;
  min-width: 0;
  border-right: 1px solid #000;
}

.block > .folio {
  border-right: 0;
}

.r1 { width: 49px; }
.r2 { width: 51px; }
.r3 { width: 44px; }
.r4 { width: 90px; }

.revs td {
  height: 10px;
  padding: 0;
  box-sizing: border-box;
  border: 0 solid #000;
  border-width: 0 1px 1px 0;
  line-height: 9px;
  text-align: center;
  white-space: nowrap;
}

.revs tr:last-child td {
  border-bottom: 0;
}

.revs td.name {
  padding-left: 2px;
  text-align: left;
}

.brand {
  display: flex;
  align-items: center;
  gap: 3px;
  height: 20px;
  border-bottom: 1px solid #000;
}

.brand svg {
  width: 19px;
  height: 19px;
}

.brand strong {
  font-size: 24px;
  font-weight: normal;
  line-height: 20px;
}

.who {
  display: flex;
  align-items: center;
  justify-content: space-between;
  height: 19px;
  padding: 0 8px 0 1px;
}

.who em {
  font-size: 9px;
  font-style: normal;
  line-height: 10px;
  padding-top: 5px;
}

.about {
  padding: 1px 0 0 2px;
}

.about p {
  font-size: 10px;
  line-height: 12px;
}

.rover {
  display: flex;
  height: 20px;
  border-bottom: 1px solid #000;
}

.rover strong {
  flex: 1;
  padding-left: 39px;
  font-size: 15px;
  font-weight: normal;
  line-height: 20px;
}

.signs {
  display: grid;
  width: 41px;
  border-left: 1px solid #000;
}

.signs span {
  padding-left: 2px;
}

.signs span:first-child {
  border-bottom: 1px solid #000;
}

.nums {
  display: grid;
  grid-template-columns: 43px 1fr 1fr;
  height: 19px;
}

.nums div {
  display: flex;
  align-items: center;
  justify-content: space-between;
  padding: 0 4px 0 2px;
  border-left: 1px solid #000;
}

.nums b,
.folio b {
  font-size: 11px;
  font-weight: normal;
}

.nums .rel {
  padding-top: 6px;
  padding-right: 2px;
  text-align: right;
}

.folio {
  display: grid;
  grid-template-rows: 15px 15px 10px;
  line-height: 15px;
}

.folio div {
  display: flex;
  justify-content: space-between;
  padding-left: 1px;
  border-bottom: 1px solid #000;
}

.folio .next {
  justify-content: flex-end;
  padding-right: 2px;
  border: 0;
  line-height: 10px;
}

.template {
  position: absolute;
  left: 13px;
  bottom: 12px;
}

.fold {
  position: absolute;
}

.fold.down {
  left: calc(50% - 7px);
  bottom: 16px;
  width: 14px;
  height: 16px;
}

.fold.east {
  right: 0;
  top: 388px;
  width: 20px;
  height: 14px;
}

.box {
  position: absolute;
  box-sizing: border-box;
  border: 1px solid #00f0f4;
}

/* scroll bars */
.vscroll {
  display: flex;
  flex-direction: column;
  width: 17px;
  box-sizing: border-box;
  padding: 0 1px;
  background: linear-gradient(90deg, #f0eeea, #fefefb);
}

.vscroll button,
.status button {
  width: 15px;
  height: 16px;
  flex: none;
  border: 1px solid #fff;
  border-radius: 3px;
  background: #c2d3fc;
}

.vscroll svg,
.status svg {
  display: block;
  width: 9px;
  height: 9px;
  margin: auto;
  fill: none;
  stroke: #4d6185;
  stroke-width: 2;
}

.thumb {
  height: 8px;
  margin: auto 0 27px;
  border-radius: 2px;
  background: #b8ccfa;
}

.status {
  display: flex;
  flex: none;
  height: 16px;
  padding-left: 7px;
  background: linear-gradient(90deg, #1c1c1c 7px, #ece9d8 7px);
}

.size {
  width: 110px;
  padding: 2px 0 0 12px;
  box-sizing: border-box;
  white-space: nowrap;
}

.status button {
  width: 16px;
  border-color: #d8d5c4;
  background: #f2f0e6;
}

.status svg {
  stroke: #c4c1ae;
}

.track {
  flex: 1;
  background: linear-gradient(#f2f1ec, #fff);
}

.sizer {
  width: 17px;
}

.navbar {
  display: grid;
  grid-template-columns: 1fr auto 1fr;
  flex: none;
  height: 27px;
  background: linear-gradient(#f4f3ea, #dcd8c2);
}

.group {
  display: flex;
  align-items: center;
}

.group.end {
  justify-content: flex-end;
}

.pager {
  display: flex;
  align-items: center;
  gap: 4px;
  padding: 0 4px;
}

.pager input {
  width: 60px;
  text-align: center;
}

/* taskbar */
.taskbar {
  display: flex;
  flex: none;
  height: 30px;
  background: linear-gradient(#2c5cc8, #4c94f8 8%, #2868e0 20%, #245edc 80%, #1c48b0);
  color: #fff;
}

.start {
  display: flex;
  align-items: center;
  gap: 4px;
  width: 97px;
  padding-left: 10px;
  border-radius: 0 10px 10px 0;
  background: linear-gradient(#2c7c2c, #6cbc6c 8%, #3c9c3c 25%, #389838 75%, #246c24);
  box-shadow: inset -3px 0 4px #1c641c;
  font: italic bold 17px/20px "Open Sans", "Noto Sans", sans-serif;
  text-shadow: 1px 1px 2px #143c14;
}

.start svg {
  width: 20px;
  height: 20px;
}

.quick {
  display: flex;
  align-items: center;
  padding: 0 22px 0 9px;
}

.quick button {
  width: 23px;
}

.quick .ico {
  display: block;
  margin: auto;
}

.tasks {
  display: flex;
  flex: 1;
  gap: 2px;
  min-width: 0;
  padding: 3px 0 2px;
}

.tasks button {
  display: flex;
  align-items: center;
  gap: 3px;
  flex: 1;
  min-width: 0;
  padding: 0 5px 0 8px;
  border-radius: 3px;
  background: linear-gradient(#5c9cfc, #3c80f4 15%, #3878ec 85%, #2c64d4);
  white-space: nowrap;
}

.tasks button.on {
  background: linear-gradient(#143c8c, #1e50b4 20%, #1c50b8);
}

.tasks b {
  color: #fcc468;
}

.tick {
  margin-right: 0;
}

.lang {
  display: flex;
  align-items: center;
  gap: 4px;
  padding: 0 18px 0 8px;
}

.lang button {
  width: 22px;
  height: 18px;
  background: #2f62bc;
}

.tray {
  display: flex;
  align-items: center;
  gap: 4px;
  padding-right: 13px;
  background: linear-gradient(#0c70c8, #18b0f8 10%, #1294ec 30%, #1090e8 85%, #0c70c0);
  border-left: 1px solid #0c3c94;
}

.tray button {
  width: 17px;
  height: 17px;
  margin-left: -7px;
  border-radius: 50%;
  background: radial-gradient(circle at 40% 30%, #6cc0fc, #1c64dc);
}

.tray svg {
  display: block;
  width: 11px;
  height: 11px;
  margin: auto;
}

.gzat {
  width: 16px;
  background: #f4f4f4;
  color: #000;
  font: bold 6px/14px "Liberation Sans", sans-serif;
  text-align: center;
}

.tray time {
  margin-left: 2px;
}
</style>
